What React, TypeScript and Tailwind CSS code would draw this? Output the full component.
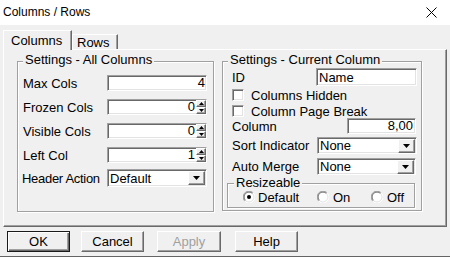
import React from "react";

const sunken =
  "bg-white border border-t-[#a0a0a0] border-l-[#a0a0a0] border-b-white border-r-white shadow-[inset_1px_1px_0_#696969,inset_-1px_-1px_0_#e3e3e3]";
const raised =
  "bg-[#f0f0f0] border border-t-white border-l-white border-b-[#696969] border-r-[#696969] shadow-[inset_-1px_-1px_0_#a0a0a0]";

function Spin() {
  return (
    <div className="flex flex-col w-[10px] h-full">
      <div className={`${raised} flex-1 flex items-center justify-center`}>
        <svg width="5" height="3" viewBox="0 0 5 3">
          <path d="M2.5 0L5 3H0z" fill="#000" />
        </svg>
      </div>
      <div className={`${raised} flex-1 flex items-center justify-center`}>
        <svg width="5" height="3" viewBox="0 0 5 3">
          <path d="M0 0H5L2.5 3z" fill="#000" />
        </svg>
      </div>
    </div>
  );
}

function DropBtn() {
  return (
    <div className={`${raised} w-[17px] h-[14px] mr-[1px] flex items-center justify-center`}>
      <svg width="7" height="4" viewBox="0 0 7 4">
        <path d="M0 0H7L3.5 4z" fill="#000" />
      </svg>
    </div>
  );
}

function Radio({ checked }: { checked?: boolean }) {
  return (
    <svg width="12" height="12" viewBox="0 0 12 12">
      <circle cx="6" cy="6" r="5.5" fill="#fff" />
      <path d="M1.8 10.2A5.5 5.5 0 0 1 10.2 1.8" fill="none" stroke="#a0a0a0" strokeWidth="1" />
      <path d="M10.2 1.8A5.5 5.5 0 0 1 1.8 10.2" fill="none" stroke="#ffffff" strokeWidth="1" />
      <path d="M2.5 9.5A4.5 4.5 0 0 1 9.5 2.5" fill="none" stroke="#696969" strokeWidth="1" />
      <path d="M9.5 2.5A4.5 4.5 0 0 1 2.5 9.5" fill="none" stroke="#e3e3e3" strokeWidth="1" />
      {checked && <circle cx="6" cy="6" r="2" fill="#000" />}
    </svg>
  );
}

function Check() {
  return <div className={`${sunken} w-[12px] h-[12px]`} />;
}

export default function App() {
  return (
    <div className="w-[450px] h-[257px] bg-[#f0f0f0] flex flex-col text-[13px] leading-[15px] text-black font-['Liberation_Sans',Arial,sans-serif] overflow-hidden">
      {/* Title bar */}
      <div className="h-[25px] shrink-0 bg-white flex items-center justify-between pl-[3px] pr-[13px] text-[12px]">
        <span>Columns / Rows</span>
        <svg width="11" height="11" viewBox="0 0 11 11">
          <path d="M0.5 0.5L10.5 10.5M10.5 0.5L0.5 10.5" stroke="#000" strokeWidth="1" />
        </svg>
      </div>

      {/* Tabs */}
      <div className="flex items-end h-[19px] shrink-0 mt-[5px] pl-[3px]">
        <div className="relative z-10 h-[20px] -mb-px w-[69px] bg-[#f0f0f0] border-l border-t border-r border-t-white border-l-white border-r-[#696969] shadow-[inset_-1px_0_0_#a0a0a0] pl-[7px] pt-[2px]">
          Columns
        </div>
        <div className="h-[15px] w-[46px] border-l border-t border-r border-t-white border-l-white border-r-[#696969] shadow-[inset_-1px_0_0_#a0a0a0] pl-[4px] leading-[13px] pt-[1px]">
          Rows
        </div>
      </div>

      {/* Panel */}
      <div className="ml-[3px] w-[444px] h-[178px] shrink-0 border border-t-white border-l-white border-r-[#696969] border-b-[#696969] shadow-[inset_-1px_-1px_0_#a0a0a0] flex items-start pt-[11px] pl-[13px]">
        {/* Left group */}
        <div className="w-[197px] h-[151px] border border-[#a0a0a0] shadow-[1px_1px_0_white,inset_1px_1px_0_white] flex flex-col">
          <span className="-mt-[10px] ml-[5px] px-[2px] bg-[#f0f0f0] self-start h-[15px]">
            Settings - All Columns
          </span>
          <div className="flex items-center h-[16px] mt-[8px]">
            <span className="w-[89px] pl-[5px]">Max Cols</span>
            <div className={`${sunken} w-[100px] h-[16px] flex items-center justify-end pr-[1px] leading-[14px]`}>4</div>
          </div>
          <div className="flex items-center h-[16px] mt-[8px]">
            <span className="w-[89px] pl-[5px]">Frozen Cols</span>
            <div className={`${sunken} w-[100px] h-[16px] flex items-stretch justify-end leading-[14px]`}>
              <span className="flex items-center pr-[1px]">0</span>
              <Spin />
            </div>
          </div>
          <div className="flex items-center h-[16px] mt-[8px]">
            <span className="w-[89px] pl-[5px]">Visible Cols</span>
            <div className={`${sunken} w-[100px] h-[16px] flex items-stretch justify-end leading-[14px]`}>
              <span className="flex items-center pr-[1px]">0</span>
              <Spin />
            </div>
          </div>
          <div className="flex items-center h-[16px] mt-[8px]">
            <span className="w-[89px] pl-[5px]">Left Col</span>
            <div className={`${sunken} w-[100px] h-[16px] flex items-stretch justify-end leading-[14px]`}>
              <span className="flex items-center pr-[1px]">1</span>
              <Spin />
            </div>
          </div>
          <div className="flex items-center h-[18px] mt-[6px]">
            <span className="w-[89px] pl-[4px] tracking-[-0.3px] whitespace-nowrap">Header Action</span>
            <div className={`${sunken} w-[100px] h-[18px] flex items-center justify-between pl-[2px]`}>
              <span>Default</span>
              <DropBtn />
            </div>
          </div>
        </div>

        {/* Right group */}
        <div className="ml-[8px] w-[200px] h-[150px] border border-[#a0a0a0] shadow-[1px_1px_0_white,inset_1px_1px_0_white] flex flex-col">
          <span className="-mt-[10px] ml-[5px] px-[2px] bg-[#f0f0f0] self-start h-[15px]">
            Settings - Current Column
          </span>
          <div className="flex items-center h-[18px] mt-[1px]">
            <span className="w-[93px] pl-[9px]">ID</span>
            <div className={`${sunken} w-[101px] h-[18px] flex items-center pl-[2px]`}>Name</div>
          </div>
          <div className="flex items-center h-[14px] mt-[2px] pl-[9px]">
            <Check />
            <span className="ml-[7px]">Columns Hidden</span>
          </div>
          <div className="flex items-center h-[14px] mt-[2px] pl-[9px]">
            <Check />
            <span className="ml-[7px]">Column Page Break</span>
          </div>
          <div className="flex items-center h-[16px] mt-[0px]">
            <span className="w-[124px] pl-[9px]">Column</span>
            <div className={`${sunken} w-[69px] h-[16px] flex items-center justify-end pr-[2px] leading-[14px]`}>8,00</div>
          </div>
          <div className="flex items-center h-[17px] mt-[3px]">
            <span className="w-[94px] pl-[9px]">Sort Indicator</span>
            <div className={`${sunken} w-[100px] h-[17px] flex items-center justify-between pl-[2px]`}>
              <span>None</span>
              <DropBtn />
            </div>
          </div>
          <div className="flex items-center h-[17px] mt-[4px]">
            <span className="w-[94px] pl-[9px]">Auto Merge</span>
            <div className={`${sunken} w-[99px] h-[17px] flex items-center justify-between pl-[2px]`}>
              <span>None</span>
              <DropBtn />
            </div>
          </div>
          {/* Resizeable group */}
          <div className="ml-[4px] mt-[8px] w-[188px] h-[25px] border border-[#a0a0a0] shadow-[1px_1px_0_white,inset_1px_1px_0_white] flex flex-col">
            <span className="-mt-[9px] ml-[6px] px-[2px] bg-[#f0f0f0] self-start h-[15px]">Resizeable</span>
            <div className="flex items-center h-[14px] pl-[15px]">
              <div className="w-[74px] flex items-center gap-[3px]">
                <Radio checked />
                <span>Default</span>
              </div>
              <div className="w-[54px] flex items-center gap-[4px]">
                <Radio />
                <span>On</span>
              </div>
              <div className="flex items-center gap-[4px]">
                <Radio />
                <span>Off</span>
              </div>
            </div>
          </div>
        </div>
      </div>

      {/* Buttons */}
      <div className="flex items-center h-[21px] shrink-0 mt-[4px] pl-[7px]">
        <div className="w-[63px] h-[21px] border border-[#1a1a1a] bg-[#f0f0f0] shadow-[inset_1px_1px_0_white,inset_-1px_-1px_0_#696969,inset_-2px_-2px_0_#a0a0a0] flex items-center justify-center">
          OK
        </div>
        <div className={`${raised} ml-[11px] w-[63px] h-[21px] flex items-center justify-center`}>Cancel</div>
        <div className={`${raised} ml-[13px] w-[64px] h-[21px] flex items-center justify-center text-[#a0a0a0]`}>Apply</div>
        <div className={`${raised} ml-[14px] w-[63px] h-[21px] flex items-center justify-center`}>Help</div>
      </div>

      <div className="mt-auto h-px shrink-0 bg-[#646464]" />
    </div>
  );
}
